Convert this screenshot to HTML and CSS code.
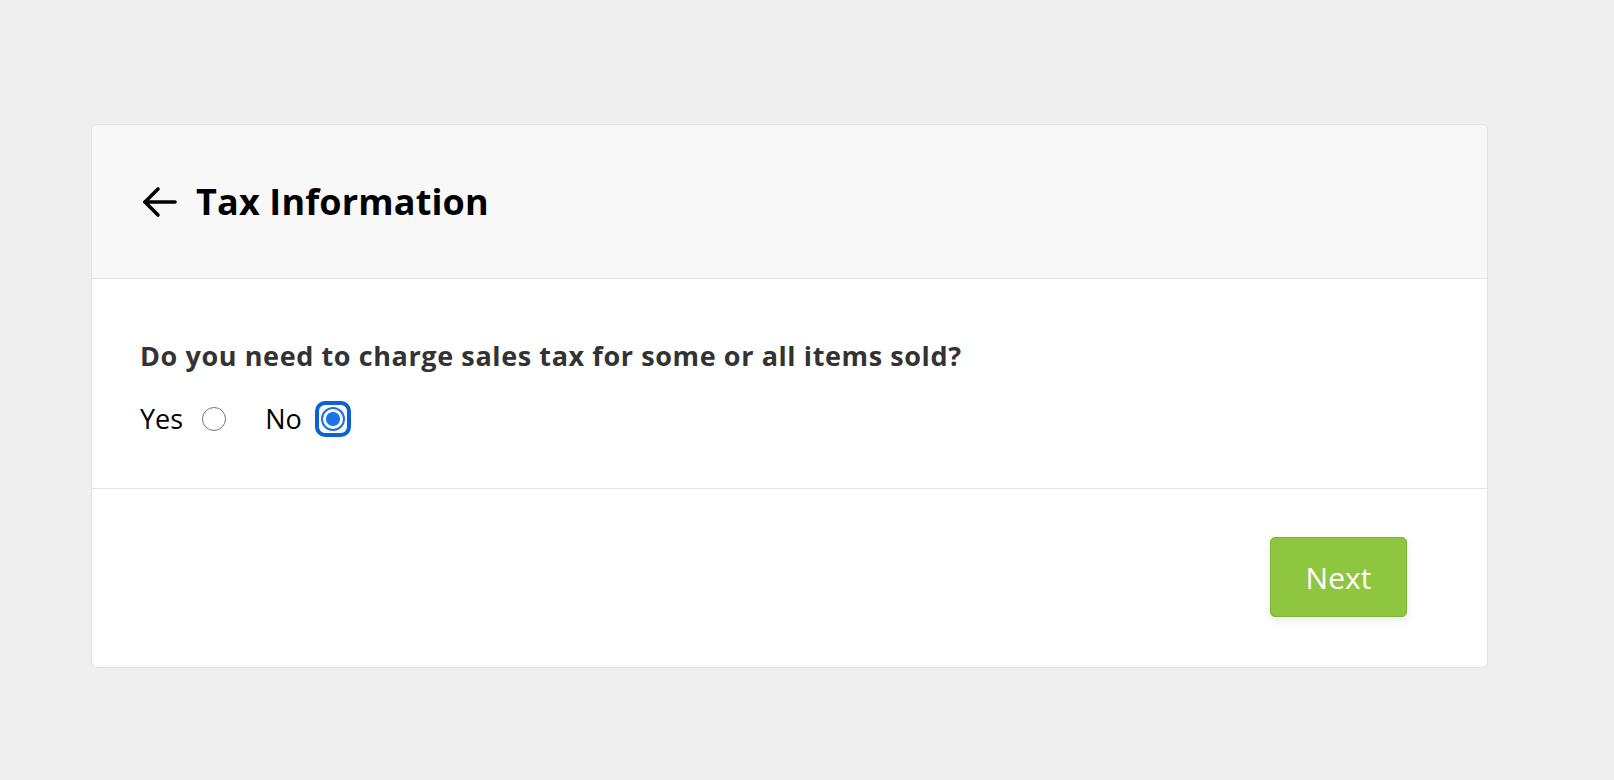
FILE: index.html
```html
<!DOCTYPE html>
<html lang="en">
<head>
<meta charset="utf-8">
<title>Tax Information</title>
<link rel="stylesheet" href="styles.css">
</head>
<body>
<div class="card">
  <header class="card-header">
    <svg class="back" width="36" height="32" viewBox="0 0 36 32" fill="none" stroke="#000" stroke-width="3.6" stroke-linecap="round" stroke-linejoin="round">
      <path d="M3 16 H33"/>
      <path d="M16 3 L3 16 L16 29"/>
    </svg>
    <h1 class="title">Tax Information</h1>
  </header>
  <section class="card-body">
    <p class="question">Do you need to charge sales tax for some or all items sold?</p>
    <div class="options">
      <label class="option">Yes <input type="radio" name="tax" class="radio"></label>
      <label class="option">No <span class="radio-wrap"><input type="radio" name="tax" class="radio" checked><span class="focus"></span></span></label>
    </div>
  </section>
  <footer class="card-footer">
    <button class="next">Next</button>
  </footer>
</div>
</body>
</html>
```
FILE: styles.css
```css
html, body {
  margin: 0;
  padding: 0;
}
body {
  background: #efefef;
  font-family: "Open Sans", "Lato", sans-serif;
  color: #000;
}
.card {
  margin: 124px 0 0 91px;
  width: 1397px;
  box-sizing: border-box;
  background: #fff;
  border: 1px solid #e2e2e4;
  border-radius: 7px;
  overflow: hidden;
}
.card-header {
  background: #f8f8f9;
  border-bottom: 1px solid #e4e4e6;
  height: 154px;
  box-sizing: border-box;
  display: flex;
  align-items: center;
  padding: 0 0 0 50px;
}
.back {
  display: block;
  margin-right: 18px;
}
.title {
  margin: 0;
  font-size: 36px;
  font-weight: 700;
  letter-spacing: 0.15px;
}
.card-body {
  padding: 61px 0 50px 48px;
  border-bottom: 1px solid #e4e4e6;
}
.question {
  margin: 0;
  font-size: 27px;
  font-weight: 700;
  color: #333;
  line-height: 32px;
  letter-spacing: 0.6px;
}
.options {
  display: flex;
  align-items: center;
  margin-top: 28px;
  height: 38px;
  gap: 39px;
}
.option {
  display: flex;
  align-items: center;
  font-size: 27px;
  line-height: 38px;
  gap: 19px;
}
.radio-wrap {
  position: relative;
  display: block;
  width: 24px;
  height: 24px;
}
.radio {
  appearance: none;
  -webkit-appearance: none;
  display: block;
  margin: 0;
  width: 24px;
  height: 24px;
  border: 1.5px solid #767676;
  border-radius: 50%;
  background: #fff;
  box-sizing: border-box;
}
.radio:checked {
  border: 2px solid #1a73e8;
  background: radial-gradient(circle, #1a73e8 0 6.5px, #fff 7.5px);
}
.focus {
  position: absolute;
  left: -6px;
  top: -6px;
  width: 36px;
  height: 36px;
  box-sizing: border-box;
  border: 4px solid #0b62d0;
  border-radius: 10px;
  pointer-events: none;
}
.card-footer {
  display: flex;
  justify-content: flex-end;
  padding: 48px 80px 50px 0;
}
.next {
  width: 137px;
  height: 80px;
  background: #8fc640;
  border: 1px solid #7fb236;
  border-radius: 5px;
  color: #fff;
  font-family: "Open Sans", "Lato", sans-serif;
  font-size: 30px;
  font-weight: 400;
  box-shadow: 0 4px 10px rgba(0, 0, 0, 0.08);
  cursor: pointer;
}
```
